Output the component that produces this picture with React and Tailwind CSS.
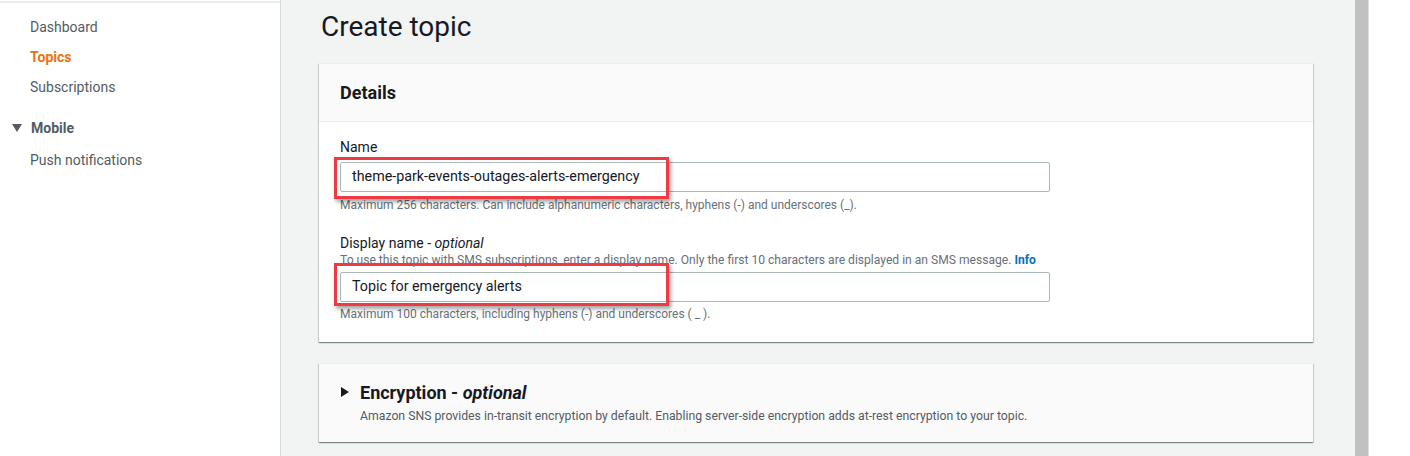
import React from "react";

const font = { fontFamily: "Roboto, 'Liberation Sans', sans-serif" };

function SideItem({ children, active, extra = "" }) {
  return (
    <div
      className={`h-[30px] leading-[30px] pl-[30px] text-[14px] ${extra} ${
        active ? "text-[#ec7211] font-bold" : "text-[#545b64]"
      }`}
    >
      {children}
    </div>
  );
}

export default function App() {
  return (
    <div className="flex w-[1410px] h-[456px] overflow-hidden bg-white" style={font}>
      {/* Sidebar */}
      <aside className="w-[281px] shrink-0 bg-white border-r border-[#d5dbdb]">
        <div className="mt-px h-[2px] bg-[#eaeded]" />
        <div className="pt-[9px]">
          <SideItem>Dashboard</SideItem>
          <SideItem active>Topics</SideItem>
          <SideItem>Subscriptions</SideItem>
          <div className="mt-[11px] h-[30px] flex items-center pl-[12px] text-[14px] font-bold text-[#545b64]">
            <svg width="10" height="8" viewBox="0 0 10 8" className="mr-[9px]">
              <polygon points="0,0 10,0 5,8" fill="#545b64" />
            </svg>
            Mobile
          </div>
          <SideItem extra="mt-[2px]">Push notifications</SideItem>
        </div>
      </aside>

      {/* Main */}
      <main className="flex-1 bg-[#f2f3f3] pl-[38px] pr-[42px]">
        <h1 className="mt-[9px] ml-[2px] text-[28px] leading-[36px] text-[#16191f] font-normal">
          Create topic
        </h1>

        {/* Details card */}
        <section className="relative mt-[18px] bg-white border-t border-[#eaeded] shadow-[0_1px_1px_0_rgba(0,28,36,0.35),1px_1px_1px_0_rgba(0,28,36,0.12),-1px_1px_1px_0_rgba(0,28,36,0.12)]">
          <div className="h-[58px] bg-[#fafafa] border-b border-[#eaeded] flex items-center px-[21px]">
            <h2 className="text-[18px] font-bold text-[#16191f]">Details</h2>
          </div>
          <div className="px-[21px] pt-[15px] pb-[20px]">
            <div className="text-[14px] leading-[20px] text-[#16191f]">Name</div>
            <div className="mt-[5px] w-[710px] h-[30px] border border-[#aab7b8] rounded-[2px] bg-white flex items-center pl-[11px] text-[14.3px] text-[#16191f]">
              theme-park-events-outages-alerts-emergency
            </div>
            <div className="mt-[5px] text-[12px] leading-[16px] text-[#687078]">
              Maximum 256 characters. Can include alphanumeric characters, hyphens (-) and underscores (_).
            </div>
            <div className="mt-[21px] text-[14px] leading-[18px] text-[#16191f]">
              Display name - <i>optional</i>
            </div>
            <div className="text-[12.1px] leading-[16px] text-[#687078]">
              To use this topic with SMS subscriptions, enter a display name. Only the first 10 characters are displayed in an SMS message.{" "}
              <span className="font-bold text-[#0073bb]">Info</span>
            </div>
            <div className="mt-[4px] w-[710px] h-[30px] border border-[#aab7b8] rounded-[2px] bg-white flex items-center pl-[11px] text-[14.3px] text-[#16191f]">
              Topic for emergency alerts
            </div>
            <div className="mt-[4px] text-[12px] leading-[16px] text-[#687078]">
              Maximum 100 characters, including hyphens (-) and underscores ( _ ).
            </div>
          </div>

          {/* Annotation boxes */}
          <div className="absolute left-[15px] top-[93px] w-[335px] h-[42px] border-[3px] border-[#ee3a42] shadow-[2px_3px_4px_rgba(0,0,0,0.35)]" />
          <div className="absolute left-[15px] top-[199px] w-[335px] h-[43px] border-[3px] border-[#ee3a42] shadow-[2px_3px_4px_rgba(0,0,0,0.35)]" />
        </section>

        {/* Encryption card */}
        <section className="mt-[21px] bg-[#fafafa] border-t border-[#eaeded] shadow-[0_1px_1px_0_rgba(0,28,36,0.35),1px_1px_1px_0_rgba(0,28,36,0.12),-1px_1px_1px_0_rgba(0,28,36,0.12)] pl-[22px] pt-[16px] pb-[18px]">
          <div className="flex items-center h-[24px]">
            <svg width="8" height="10" viewBox="0 0 8 10" className="mr-[11px]">
              <polygon points="0,0 8,5 0,10" fill="#16191f" />
            </svg>
            <span className="text-[18px] font-bold text-[#16191f]">
              Encryption - <i>optional</i>
            </span>
          </div>
          <div className="mt-[4px] pl-[19px] text-[12.25px] leading-[16px] text-[#545b64]">
            Amazon SNS provides in-transit encryption by default. Enabling server-side encryption adds at-rest encryption to your topic.
          </div>
        </section>
      </main>

      {/* Scrollbar */}
      <div className="w-[13px] shrink-0 bg-[#c1c1c1]" />
      <div className="w-px shrink-0 bg-[#dcdcdc]" />
      <div className="w-[41px] shrink-0 bg-white" />
    </div>
  );
}
